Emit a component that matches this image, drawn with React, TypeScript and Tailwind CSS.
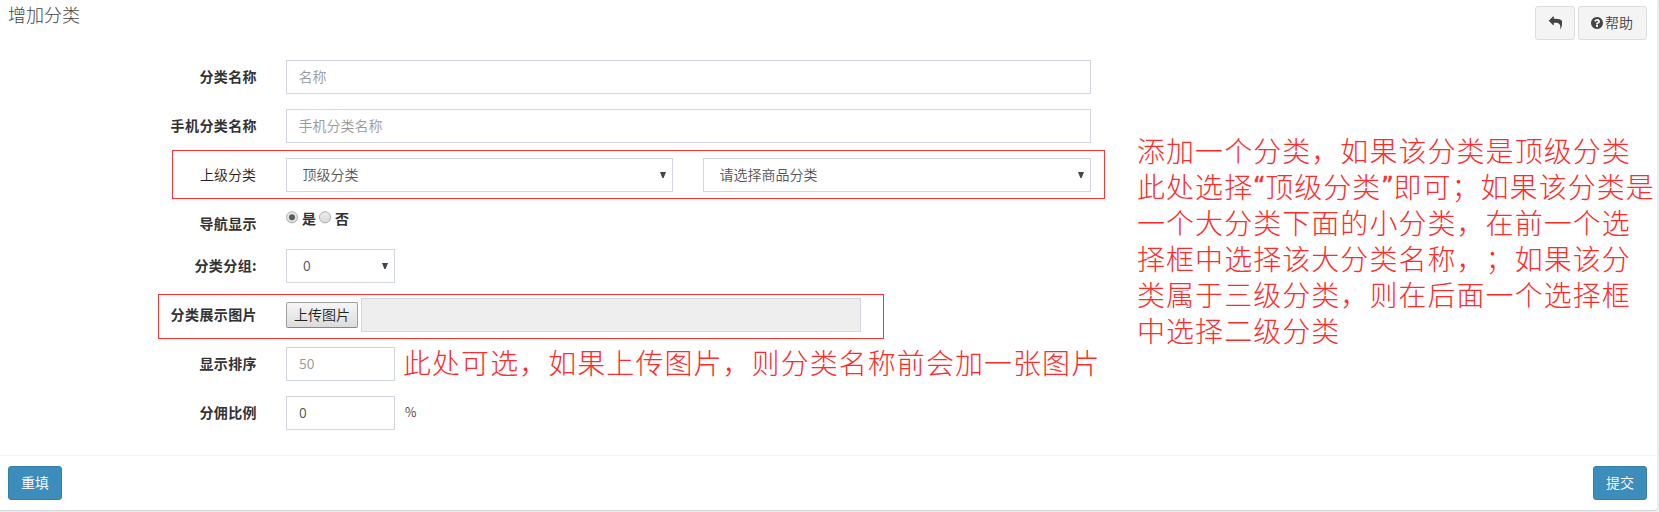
import type { ReactNode } from "react";

const CONTROL =
  "block h-[34px] rounded-none border border-[#d2d6de] bg-white pb-[2px] text-[14px] text-[#555] outline-none placeholder:text-[#999] placeholder:opacity-100";

function Row({ label, regular = false, className = "h-[34px]", children }: { label: string; regular?: boolean; className?: string; children: ReactNode }) {
  return (
    <div className={`flex ${className}`}>
      <label className={`mr-[29px] flex h-[32px] w-[257px] shrink-0 items-center justify-end text-[14px] leading-[20px] ${regular ? "pr-px font-[350] text-[#222]" : "font-bold tracking-[0.4px] text-[#333]"}`}>
        {label}
      </label>
      {children}
    </div>
  );
}

function Select({ value, className, numeric = false }: { value: string; className: string; numeric?: boolean }) {
  return (
    <div className={`relative ${className}`}>
      <select className={`${CONTROL} w-full appearance-none ${numeric ? "pl-4 text-[12.5px]" : "pl-[15.5px]"}`} defaultValue={value}>
        <option>{value}</option>
      </select>
      <svg className="pointer-events-none absolute right-[7px] top-[14px]" width="6" height="6" viewBox="0 0 6 6" fill="#444">
        <path d="M0 0h6L3.6 6H2.4z" />
      </svg>
    </div>
  );
}

function Radio({ checked = false }: { checked?: boolean }) {
  return (
    <svg width="13" height="13" viewBox="0 0 13 13" className="shrink-0">
      <defs>
        <linearGradient id="radioFill" x1="0" y1="0" x2="0" y2="1">
          <stop offset="0" stopColor="#ededed" />
          <stop offset="1" stopColor="#d9d9d9" />
        </linearGradient>
      </defs>
      <circle cx="6" cy="6.3" r="5.6" fill="url(#radioFill)" stroke="#a9a9a9" strokeWidth="0.9" />
      {checked && <circle cx="6" cy="6.3" r="3" fill="#5c5c5c" />}
    </svg>
  );
}

function ReplyIcon() {
  return (
    <svg width="14" height="14" viewBox="0 0 1792 1792" fill="currentColor" className="-ml-px">
      <path d="M1792 1120q0 166-127 451-3 7-10.5 24t-13.5 30-13 22q-12 17-28 17-15 0-23.5-10t-8.5-25q0-9 2.5-26.5t2.5-23.5q5-68 5-123 0-112-19.5-200.5t-54-153.5-89.5-110-119.5-74.5-150.5-43.5-176.5-12.5h-224v256q0 26-19 45t-45 19-45-19l-512-512q-19-19-19-45t19-45l512-512q19-19 45-19t45 19 19 45v256h224q713 0 875 403 53 134 53 333z" />
    </svg>
  );
}

function HelpIcon() {
  return (
    <svg width="12" height="12" viewBox="128 128 1536 1536" fill="currentColor">
      <path d="M1024 1376v-192q0-14-9-23t-23-9h-192q-14 0-23 9t-9 23v192q0 14 9 23t23 9h192q14 0 23-9t9-23zm256-672q0-88-55.5-163t-138.5-116-170-41q-243 0-371 213-15 24 8 42l132 100q7 6 19 6 16 0 25-12 53-68 86-92 34-24 86-24 48 0 85.5 26t37.5 59q0 38-20 61t-68 45q-63 28-115.5 86.5t-52.5 125.5v36q0 14 9 23t23 9h192q14 0 23-9t9-23q0-19 21.5-49.5t54.5-49.5q32-18 49-28.5t46-35 44.5-48 28-60.5 12.5-81zm384 192q0 209-103 385.5t-279.5 279.5-385.5 103-385.5-103-279.5-279.5-103-385.5 103-385.5 279.5-279.5 385.5-103 385.5 103 279.5 279.5 103 385.5z" />
    </svg>
  );
}

function Quote({ children }: { children: string }) {
  return <span className="flex w-[12px] shrink-0 justify-center font-['DejaVu_Sans'] text-[24px] font-normal tracking-normal [-webkit-text-stroke:0.5px_#ff2a2a]">{children}</span>;
}

const NOTE =
  "absolute whitespace-nowrap text-[28px] font-light leading-[36px] tracking-[1.05px] text-[#ff2a2a] [font-kerning:none] [text-spacing-trim:space-all] [font-feature-settings:'chws'_0,'halt'_0]";

export default function App() {
  return (
    <div className="relative h-[512px] w-[1659px] overflow-hidden bg-[#ecf0f5] font-['Noto_Sans_CJK_SC',sans-serif] font-[350]">
      <div className="flex h-[510px] w-[1657px] flex-col rounded-br-[3px] bg-white shadow-[0_1px_1px_rgba(0,0,0,0.12)]">
        <header className="flex h-[60px] items-start justify-between pl-2 pr-[10px] pt-[6px] text-[#444]">
          <h3 className="-mt-px text-[18px] font-light leading-[18px]">增加分类</h3>
          <div className="flex gap-[3px]">
            <button className="flex h-[34px] w-[40px] items-center justify-center rounded-[3px] border border-[#ddd] bg-[#f4f4f4]">
              <ReplyIcon />
            </button>
            <button className="flex h-[34px] w-[69px] items-center justify-center gap-[2px] rounded-[3px] border border-[#ddd] bg-[#f4f4f4] pb-px pr-px text-[14px]">
              <HelpIcon />
              <span className="-mt-px">帮助</span>
            </button>
          </div>
        </header>

        <main className="flex h-[395px] flex-col gap-[15px]">
          <Row label="分类名称">
            <input className={`${CONTROL} w-[805px] pl-[11.5px]`} placeholder="名称" />
          </Row>
          <Row label="手机分类名称">
            <input className={`${CONTROL} w-[805px] pl-[11.5px]`} placeholder="手机分类名称" />
          </Row>
          <Row label="上级分类" regular>
            <Select value="顶级分类" className="w-[387px]" />
            <Select value="请选择商品分类" className="ml-[30px] w-[388px]" />
          </Row>
          <Row label="导航显示" className="h-[27px]">
            <div className="flex h-[24px] items-center text-[14px] font-bold text-[#333]">
              <div className="-mt-[3px]"><Radio checked /></div>
              <span className="-mt-px ml-[3px]">是</span>
              <div className="-mt-[3px] ml-[3px]"><Radio /></div>
              <span className="-mt-px ml-[3px]">否</span>
            </div>
          </Row>
          <Row label="分类分组:">
            <Select value="0" className="w-[109px]" numeric />
          </Row>
          <Row label="分类展示图片">
            <button className="mr-[3px] mt-1 h-[26px] w-[72px] rounded-[2px] border border-[#a0a0a0] border-b-[#888] bg-linear-to-b from-[#f6f6f6] to-[#dcdcdc] pb-[2px] text-[14px] leading-[20px] text-[#222]">
              上传图片
            </button>
            <input className="h-[34px] w-[500px] border border-[#d2d6de] bg-[#eee]" readOnly />
          </Row>
          <Row label="显示排序">
            <input className={`${CONTROL} w-[109px] px-3 text-[12.5px]`} placeholder="50" />
          </Row>
          <Row label="分佣比例">
            <input className={`${CONTROL} w-[109px] px-3 text-[12.5px]`} defaultValue="0" />
            <span className="ml-[10px] mt-[6px] text-[12.5px] leading-[20px] text-[#444]">%</span>
          </Row>
        </main>

        <footer className="flex h-[55px] justify-between border-t border-[#f4f4f4] pl-2 pr-[10px] pt-[10px]">
          <button className="h-[34px] w-[54px] rounded-[3px] border border-[#367fa9] bg-[#3c8dbc] pb-[2px] text-[14px] text-white">重填</button>
          <button className="h-[34px] w-[54px] rounded-[3px] border border-[#367fa9] bg-[#3c8dbc] pb-[2px] text-[14px] text-white">提交</button>
        </footer>
      </div>

      <div className="pointer-events-none absolute left-[172px] top-[150px] h-[49px] w-[933px] border border-[#ff3333]" />
      <div className="pointer-events-none absolute left-[158px] top-[294px] h-[45px] w-[726px] border border-[#ff3333]" />
      <p className={`${NOTE} left-[403px] top-[344px]`}>此处可选，如果上传图片，则分类名称前会加一张图片</p>
      <div className={`${NOTE} left-[1137px] top-[132px]`}>
        <p>添加一个分类，如果该分类是顶级分类</p>
        <p className="flex h-[36px]">
          此处选择<Quote>“</Quote>顶级分类<Quote>”</Quote>即可；如果该分类是
        </p>
        <p>一个大分类下面的小分类，在前一个选</p>
        <p>择框中选择该大分类名称，；如果该分</p>
        <p>类属于三级分类，则在后面一个选择框</p>
        <p>中选择二级分类</p>
      </div>
    </div>
  );
}
